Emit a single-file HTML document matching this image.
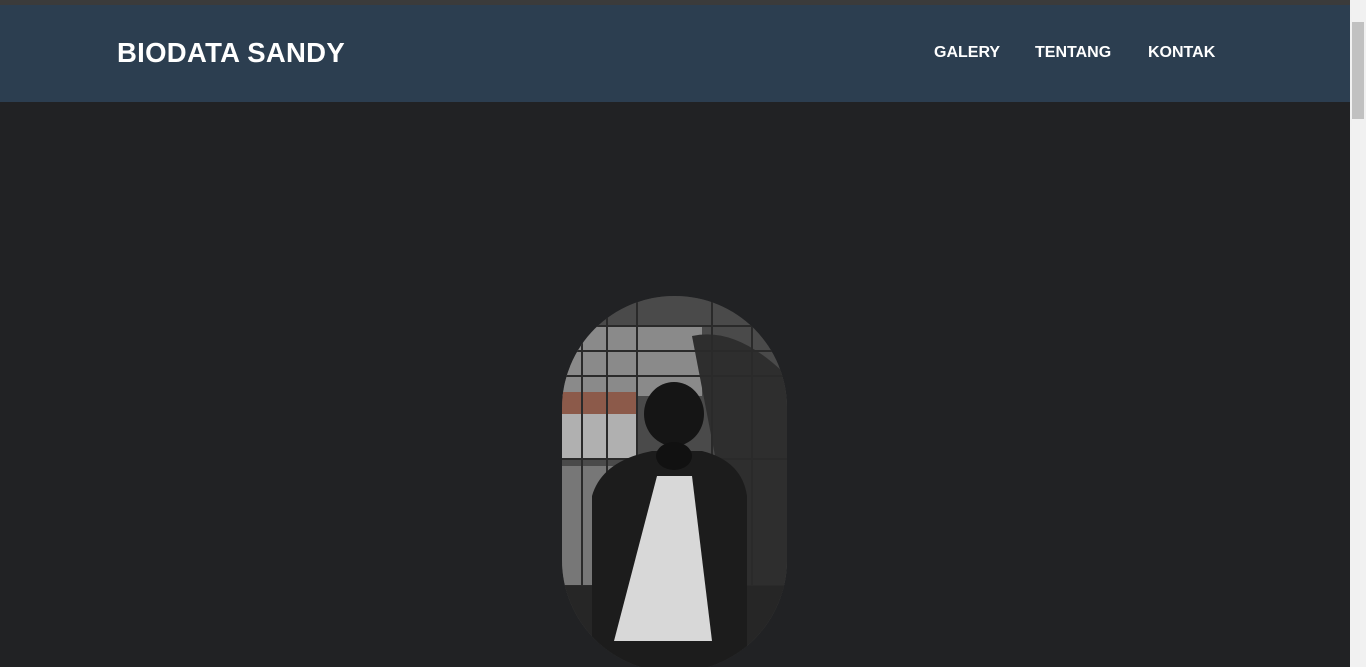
<!DOCTYPE html>
<html><head><meta charset="utf-8"><style>
*{margin:0;padding:0;box-sizing:border-box}
html,body{width:1366px;height:667px;overflow:hidden;background:#212224;font-family:"Liberation Sans",sans-serif}
#w{position:relative;width:1366px;height:667px;overflow:hidden}
.top{position:absolute;left:0;top:0;width:1350px;height:5px;background:#3b3b3b}
header{position:absolute;left:0;top:5px;width:1350px;height:97px;background:#2c3e50}
.logo{position:absolute;left:117px;top:32px;color:#fff;font-weight:bold;font-size:27.5px;letter-spacing:0.3px}
nav a{position:absolute;top:39px;color:#fff;font-weight:bold;font-size:16px;text-decoration:none}
.sb{position:absolute;left:1350px;top:0;width:16px;height:667px;background:#f1f1f1}
.thumb{position:absolute;left:1352px;top:22px;width:12px;height:97px;background:#c1c1c1}
.pill{position:absolute;left:562px;top:296px;width:225px;height:376px;border-radius:112px;overflow:hidden;background:#3a3a3a}
</style></head><body><div id="w">
<div class="top"></div>
<header><div class="logo">BIODATA SANDY</div>
<nav><a style="left:934px">GALERY</a><a style="left:1035px">TENTANG</a><a style="left:1148px">KONTAK</a></nav></header>
<div class="pill">
<svg width="225" height="376" viewBox="0 0 225 376">
<rect width="225" height="376" fill="#4a4a4a"/>
<rect x="0" y="30" width="140" height="70" fill="#8a8a8a"/>
<rect x="0" y="96" width="75" height="22" fill="#8c5a4a"/>
<rect x="0" y="118" width="75" height="45" fill="#b0b0b0"/>
<rect x="0" y="170" width="60" height="120" fill="#777"/>
<path d="M130 40 Q175 30 225 80 L225 300 L180 300 Z" fill="#2e2e2e"/>
<g stroke="#2a2a2a" stroke-width="2">
<line x1="0" y1="30" x2="225" y2="30"/><line x1="0" y1="55" x2="225" y2="55"/><line x1="0" y1="80" x2="225" y2="80"/>
<line x1="0" y1="163" x2="225" y2="163"/><line x1="0" y1="290" x2="225" y2="290"/>
<line x1="75" y1="0" x2="75" y2="300"/><line x1="20" y1="0" x2="20" y2="300"/><line x1="45" y1="0" x2="45" y2="300"/>
<line x1="150" y1="0" x2="150" y2="300"/><line x1="190" y1="0" x2="190" y2="300"/></g>
<rect x="0" y="290" width="225" height="90" fill="#262626"/>
<path d="M30 200 Q40 165 90 155 L140 155 Q180 165 185 200 L185 376 L30 376 Z" fill="#1c1c1c"/>
<path d="M95 180 L130 180 L150 345 L52 345 Z" fill="#d8d8d8"/>
<ellipse cx="112" cy="118" rx="30" ry="32" fill="#151515"/>
<ellipse cx="112" cy="160" rx="18" ry="14" fill="#111"/>
</svg></div>
<div class="sb"></div><div class="thumb"></div>
</div></body></html>
